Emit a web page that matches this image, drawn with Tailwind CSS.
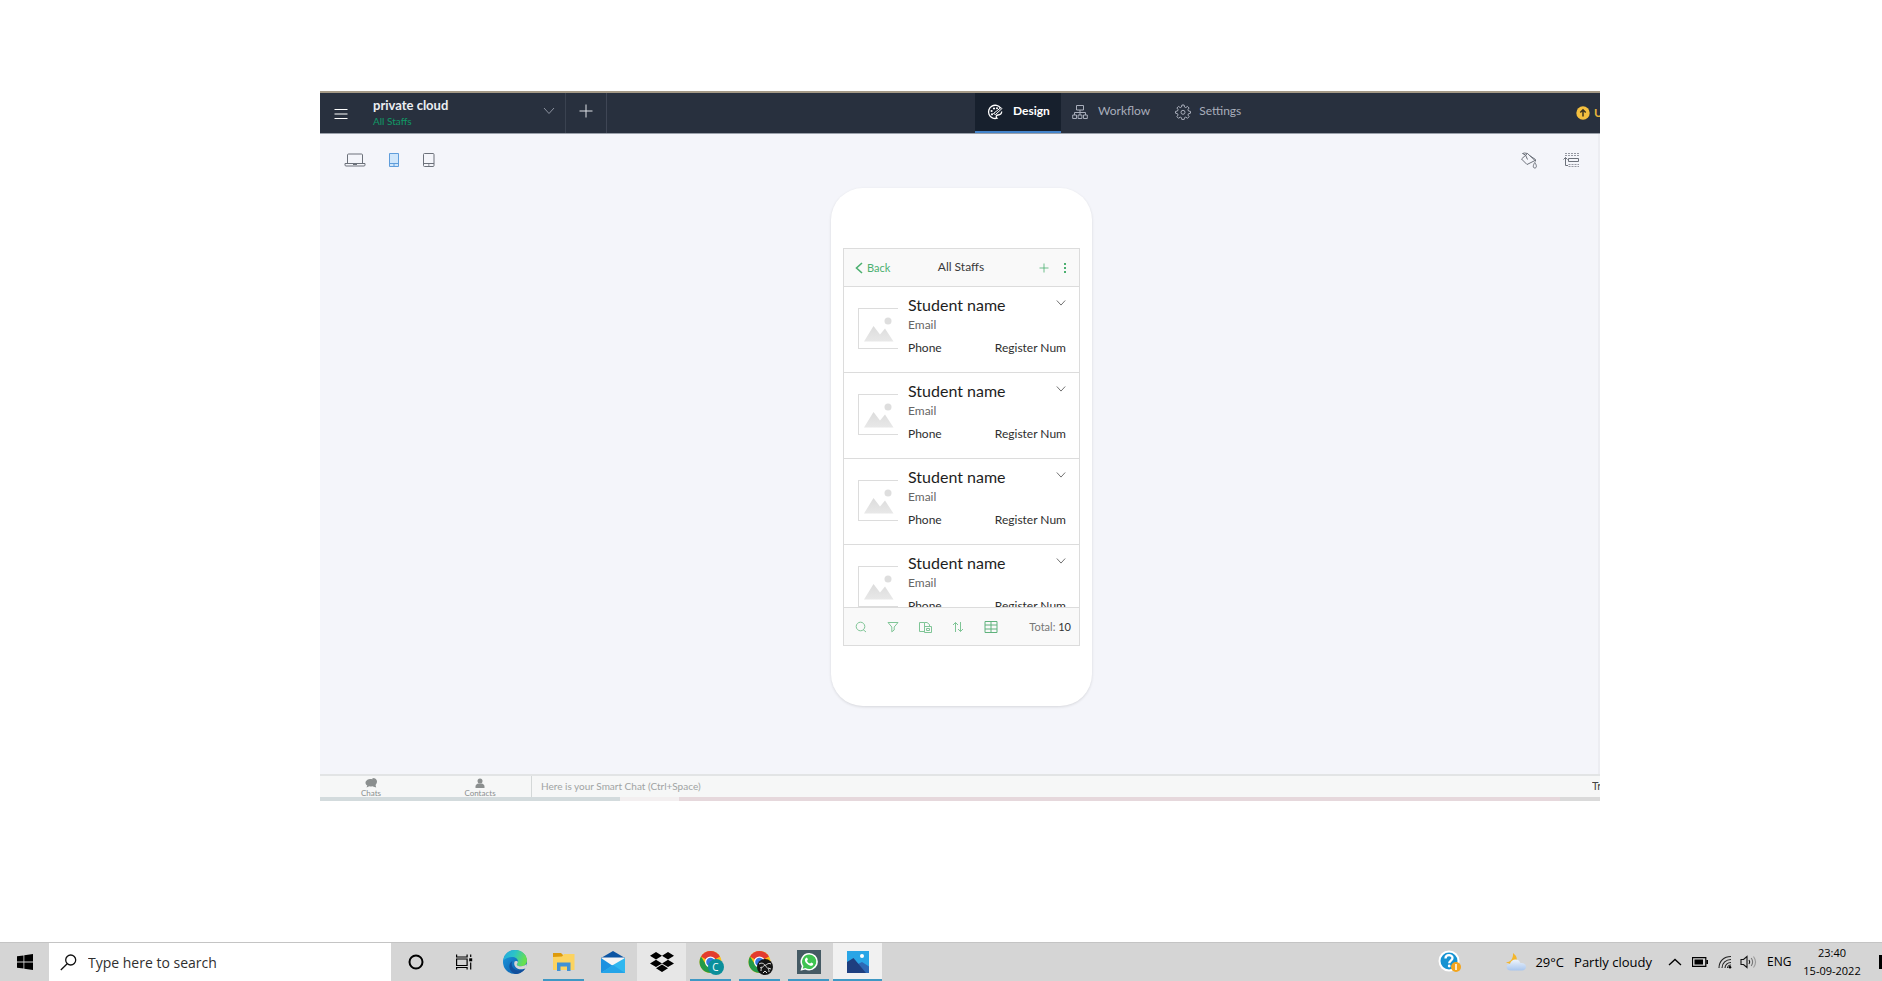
<!DOCTYPE html>
<html lang="en">
<head>
<meta charset="utf-8">
<title>private cloud - All Staffs</title>
<script src="https://cdn.jsdelivr.net/npm/@tailwindcss/browser@4"></script>
</head>
<body class="flex h-screen flex-col overflow-hidden bg-white font-['Lato',sans-serif]">

<svg class="absolute size-0" aria-hidden="true">
  <defs>
    <linearGradient id="edgeBlue" x1="0" y1="0" x2="1" y2="1"><stop offset="0" stop-color="#1b9de2"/><stop offset="1" stop-color="#0b4fa0"/></linearGradient>
    <linearGradient id="edgeGreen" x1="0" y1="0" x2="1" y2="0.3"><stop offset="0" stop-color="#23a7e0"/><stop offset="0.5" stop-color="#2cc3c8"/><stop offset="1" stop-color="#66e04f"/></linearGradient>
    <linearGradient id="mount" x1="0" y1="0" x2="0" y2="1"><stop offset="0" stop-color="#dcdcdc"/><stop offset="1" stop-color="#e8e8e8"/></linearGradient>
    <linearGradient id="cloud" x1="0" y1="0" x2="0" y2="1"><stop offset="0" stop-color="#eef4fc"/><stop offset="1" stop-color="#a9c6ee"/></linearGradient>
    <symbol id="chev" viewBox="0 0 12 8"><path d="M1 1l5 5.500 5-5.500" fill="none" stroke="currentColor"/></symbol>
    <symbol id="chrome" viewBox="0 0 24 24">
      <circle cx="11.500" cy="12" r="11" fill="#fbc116"/>
      <path d="M11.500 12L2 6.500A11 11 0 0 1 21 6.500z" fill="#e33b2e"/>
      <path d="M2 6.500A11 11 0 0 0 11.500 23L16 14.500 7 14.500z" fill="#229a48"/>
      <circle cx="11.500" cy="12" r="5.500" fill="#fff"/><circle cx="11.500" cy="12" r="4.300" fill="#3576e0"/>
    </symbol>
    <symbol id="photo" viewBox="0 0 32 28">
      <circle cx="25" cy="6" r="3.500" fill="#dedede"/>
      <path d="M1 26.500L10.500 11l6.500 8.500 5-6 8.500 13z" fill="url(#mount)"/>
    </symbol>
  </defs>
</svg>

<main class="flex min-h-0 flex-1 pt-[91px] pr-[282px] pb-[141px] pl-[320px]">
  <div class="flex min-w-0 flex-1 flex-col overflow-hidden bg-[#f4f5fa]">

    <header class="flex h-[43px] shrink-0 border-t-2 border-b border-t-[#a59a87] border-b-[#9aa0aa] bg-[#28303e] text-[#a9aebb]">
      <button class="flex w-[53px] items-center pt-0.5 pl-3.5 text-white" aria-label="Menu">
        <svg class="h-3 w-3.5" viewBox="0 0 14 12" stroke="currentColor"><path d="M0.500 1.500h13M0.500 6h13M0.500 10.500h13"/></svg>
      </button>
      <button class="flex w-[193px] items-center justify-between border-r border-[#3a4250] pr-2.5 text-left">
        <span class="flex flex-col">
          <span class="text-[13px] leading-4 font-bold text-[#eceef2]">private cloud</span>
          <span class="text-[10px] leading-4 text-[#109a66]">All Staffs</span>
        </span>
        <svg class="mb-1 h-2 w-3 text-[#8d93a0]"><use href="#chev"/></svg>
      </button>
      <button class="flex w-[41px] items-center justify-center border-r border-[#3f4655] pb-1 text-[#dfe2e7]" aria-label="Add tab">
        <svg class="size-3.5" viewBox="0 0 14 14" stroke="currentColor"><path d="M7 0.500v13M0.500 7h13"/></svg>
      </button>
      <nav class="ml-[368px] flex text-[12px] leading-4">
        <a href="#" class="flex w-[86px] items-center gap-2.5 border-b-2 border-[#4384cb] bg-[#17202d] pl-3 font-bold text-white">
          <svg class="size-4" viewBox="0 0 16 16" fill="none" stroke="currentColor" stroke-width="1.300"><path d="M13.500 4A6.600 6.600 0 1 0 10 14.200c-1.600-1.400-.6-3.200 1-3.200 1.800 0 3.600-.6 3.700-3.400"/><path d="M6.500 9.500L14 3.500l1 1-6.500 6z" stroke-width="1"/><g fill="currentColor" stroke="none"><circle cx="4.600" cy="7" r="1.100"/><circle cx="7" cy="4.500" r="1.100"/><circle cx="5" cy="10.300" r="1.100"/><circle cx="10" cy="4.300" r="1"/></g></svg>
          <span class="pb-0.5">Design</span>
        </a>
        <a href="#" class="flex items-center gap-2.5 border-b-2 border-transparent pl-[11px]">
          <svg class="size-4" viewBox="0 0 16 16" fill="none" stroke="currentColor"><path d="M4.500 1.500h7v4.500h-7zM8 6v5M2.500 11V8.500h11V11M.7 11h3.800v3.500H.7zM6.100 11h3.800v3.500H6.100zM11.500 11h3.800v3.500h-3.800z"/></svg>
          <span class="pb-0.5">Workflow</span>
        </a>
        <a href="#" class="flex items-center gap-2 border-b-2 border-transparent pl-[25px]">
          <svg class="size-4" viewBox="0 0 16 16" fill="none" stroke="currentColor"><path d="M6.900 1h2.200l.4 2 1.300.6 1.700-1.200 1.600 1.600-1.200 1.700.6 1.300 2 .4v1.800l-2 .5-.6 1.300 1.200 1.700-1.600 1.600-1.700-1.200-1.300.6-.4 1.900H6.900l-.4-1.900-1.300-.6-1.700 1.200-1.600-1.600 1.200-1.700L2.500 9.700l-2-.5V7.400l2-.4.6-1.300L1.900 4l1.600-1.600 1.700 1.200L6.500 3z"/><circle cx="8" cy="8.300" r="2"/></svg>
          <span class="pb-0.5">Settings</span>
        </a>
      </nav>
      <button class="ml-auto flex w-[24px] items-center gap-1 overflow-hidden text-[12px] font-bold whitespace-nowrap text-[#e8b43a]">
        <svg class="size-3.5 shrink-0" viewBox="0 0 14 14"><circle cx="7" cy="7" r="6.700" fill="#f4bf3f"/><path d="M7 10.500V4M4.300 6.500L7 3.800l2.700 2.700" stroke="#3b3321" stroke-width="1.500" fill="none"/></svg>
        <span>Upgrade</span>
      </button>
    </header>

    <div class="flex min-h-0 flex-1 flex-col border-r-2 border-[#ecedf2]">
      <div class="flex h-[54px] shrink-0 items-center pr-[18px] pb-0.5 pl-6 text-[#6c717a]">
        <button aria-label="Desktop"><svg class="h-4 w-[22px]" viewBox="0 0 22 16" fill="none" stroke="currentColor"><path d="M3.500 11V3a1 1 0 0 1 1-1h13a1 1 0 0 1 1 1v8M1 11.500h20v1.500a1 1 0 0 1-1 1H2a1 1 0 0 1-1-1zM9 12.500h4"/></svg></button>
        <button class="ml-[22px]" aria-label="Phone"><svg class="h-4 w-3" viewBox="0 0 12 16" fill="#cfe6fb" stroke="#5f9ddb"><path d="M1.500 1.500h9v13h-9zM1.500 11.500h9"/><path d="M5 13h2"/></svg></button>
        <button class="ml-[22px]" aria-label="Tablet"><svg class="h-4 w-3.5" viewBox="0 0 14 16" fill="none" stroke="currentColor"><rect x="1.500" y="1.500" width="10.500" height="13" rx="1"/><path d="M1.500 11.500h10.500M6 13h1.500"/></svg></button>
        <button class="ml-auto" aria-label="Theme"><svg class="size-[18px]" viewBox="0 0 18 18" fill="none" stroke="currentColor"><path d="M7.500 2.500l7.500 7L7 13.500 1.500 8zM7.500 8.500L5.500 4 2.500 2.500 4.500 2l3 .5M9.500 4.500l6 4v2"/><path d="M14.800 11.500c2.200 3 2 5.500 0 5.500s-2-2.500 0-5.500z"/></svg></button>
        <button class="ml-6" aria-label="Layout"><svg class="size-[18px]" viewBox="0 0 18 18" fill="none" stroke="currentColor"><path d="M6.500 7.500h10v3h-10z"/><path d="M3 2.500h14M3 4.500h14M6.500 13.500h10.500M6.500 15.500h10.500" stroke-dasharray="2 1" stroke-opacity="0.700"/><path d="M6 14.500H3.500V6.500M1.500 8.500l2-2 2 2"/></svg></button>
      </div>

      <div class="flex justify-center pl-[5px]">
        <div class="flex h-[518px] w-[261px] flex-col rounded-[32px] bg-white px-3 pt-[60px] shadow-[0_1px_3px_rgba(0,0,0,0.12)]">
          <div class="flex h-[398px] flex-col border border-[#dcdcdc]">
            <div class="flex h-[38px] shrink-0 items-center justify-between border-b border-[#dcdcdc] bg-[#f9f9f9] pr-2 pl-[11px] text-[#4cb070]">
              <button class="flex w-[70px] items-center gap-1 text-[11px] leading-4"><svg class="h-3 w-2" viewBox="0 0 8 12" fill="none" stroke="currentColor" stroke-width="1.600"><path d="M7 1L1.500 6 7 11"/></svg>Back</button>
              <h1 class="pb-0.5 text-[12px] leading-4 text-[#3a3a3a]">All Staffs</h1>
              <div class="flex w-[74px] items-center justify-end gap-2.5">
                <button aria-label="Add"><svg class="size-2.5" viewBox="0 0 10 10" stroke="currentColor" stroke-opacity="0.800"><path d="M5 .5v9M.5 5h9"/></svg></button>
                <button class="px-1" aria-label="More"><svg class="h-3 w-1" viewBox="0 0 4 12" fill="currentColor"><path d="M1 1h2v2H1zM1 5h2v2H1zM1 9h2v2H1z"/></svg></button>
              </div>
            </div>
            <ul id="rows" class="min-h-0 flex-1 overflow-hidden"></ul>
            <div class="flex h-[38px] shrink-0 items-center gap-5 border-t border-[#dcdcdc] bg-[#f9f9f9] pr-2 pl-[11px] text-[#7fc596]">
              <button aria-label="Search"><svg class="size-3" viewBox="0 0 12 12" fill="none" stroke="currentColor"><circle cx="5.500" cy="5.500" r="4.300"/><path d="M8 8.500L11 11"/></svg></button>
              <button aria-label="Filter"><svg class="size-3" viewBox="0 0 12 12" fill="none" stroke="currentColor"><path d="M1 1.500h10L7.200 6v3l-2.400 1.800V6z"/></svg></button>
              <button aria-label="Group"><svg class="h-3 w-[13px]" viewBox="0 0 13 12" fill="none" stroke="currentColor"><path d="M5.500 10.500h-5v-9h5zM5.500 1.500h2.500l2.500 2V5M5.500 5.500h7v6h-7zM7.500 7.500h3V9.500h-3z"/></svg></button>
              <button aria-label="Sort"><svg class="size-3" viewBox="0 0 12 12" fill="none" stroke="currentColor"><path d="M3.500 11V1.500M1 4l2.500-2.500L6 4M8.500 1v9.500M6 8l2.500 2.500L11 8"/></svg></button>
              <button aria-label="Table view"><svg class="size-3.5" viewBox="0 0 14 14" fill="none" stroke="#5fb27c"><path d="M1 1.500h12v11H1zM1 5h12M1 9h12M7 1.500v11"/></svg></button>
              <p class="ml-auto text-[11px] leading-4 text-[#777]">Total: <span class="text-[#333]">10</span></p>
            </div>
          </div>
        </div>
      </div>
    </div>

    <footer class="flex h-[23px] shrink-0 border-t-2 border-[#e2e4e5] bg-[#f6f7f7] text-[#8b8f8f]">
      <button class="flex w-[102px] flex-col items-center justify-end">
        <svg class="h-3 w-3.5 shrink-0" viewBox="0 0 14 12" fill="currentColor"><path d="M7 2c3 0 5 1.600 5 3.800S10 9.500 7 9.500c-.6 0-1.200 0-1.700-.2L2.500 10.500l.8-2C2 7.800 1.500 6.900 1.500 5.800 1.500 3.600 4 2 7 2z"/><path d="M8.500 1C11.500 1 13 2.600 13 4.500c0 1.400-.8 2.600-1.500 3.200l.7 2.800-3.200-1z"/></svg>
        <span class="text-[8px] leading-2">Chats</span>
      </button>
      <button class="flex w-[109px] grow-0 flex-col items-center justify-end pl-[7px]">
        <svg class="h-3 w-2.5 shrink-0" viewBox="0 0 10 12" fill="currentColor"><circle cx="5" cy="4" r="2.500"/><path d="M.5 11V9.500C.5 7.800 2 6.800 3.500 6.500h3C8 6.800 9.500 7.800 9.500 9.500V11z"/></svg>
        <span class="text-[8px] leading-2">Contacts</span>
      </button>
      <input aria-label="Smart Chat" placeholder="Here is your Smart Chat (Ctrl+Space)" class="min-w-0 flex-1 border-l border-[#d4d8d8] pl-[9px] text-[10px] placeholder:text-[#a0a3a3]">
      <a href="#" class="w-2 overflow-hidden text-[11px] leading-5 whitespace-nowrap text-[#444]">Try</a>
    </footer>
    <div class="flex h-1 shrink-0"><div class="w-[300px] bg-[#d3dbdd]"></div><div class="w-[59px] bg-[#f3eff0]"></div><div class="flex-1 bg-[#e6d8dc]"></div><div class="w-10 bg-[#dadada]"></div></div>
  </div>
</main>

<footer class="flex h-[39px] shrink-0 border-t border-[#c4c4c4] bg-[#d5d5d5] font-['Open_Sans','Noto_Sans',sans-serif] text-black">
  <button class="flex w-[49px] items-center justify-center" aria-label="Start"><svg class="size-4" viewBox="0 0 16 16"><path d="M0 2.300L6.500 1.400V7.600H0zM7.300 1.300L16 0v7.600H7.300zM0 8.400h6.500v6.200L0 13.700zM7.300 8.400H16V16l-8.700-1.200z"/></svg></button>
  <label class="flex w-[342px] items-center gap-[11px] bg-white pl-[11px]">
    <svg class="size-[17px] shrink-0" viewBox="0 0 17 17" fill="none" stroke="#111" stroke-width="1.300"><circle cx="10.700" cy="6" r="5"/><path d="M7.200 9.700L.8 16"/></svg>
    <input aria-label="Search" placeholder="Type here to search" class="min-w-0 flex-1 text-[14px] outline-none placeholder:text-[#2f2f2f]">
  </label>
  <button class="flex w-[49px] items-center justify-center" aria-label="Cortana"><svg class="size-4" viewBox="0 0 16 16"><circle cx="8" cy="8" r="6.500" fill="none" stroke="#000" stroke-width="2"/></svg></button>
  <button class="flex w-[50px] items-center justify-center pr-0.5" aria-label="Task view"><svg class="h-4 w-[17px]" viewBox="0 0 17 16" fill="none" stroke="#000" stroke-width="1.200"><path d="M.6.500v2.500h10.500V.5M.6 5h10.500v6.500H.6zM.6 15.500V13.500h10.500v2M14.700.5v2.500M14.700 8.500v7"/><path d="M13.200 4.300h3v3h-3z" fill="#000" stroke="none"/></svg></button>

  <button class="flex w-[49px] items-center justify-center" aria-label="Edge"><svg class="size-6" viewBox="0 0 24 24"><circle cx="12" cy="12" r="12" fill="url(#edgeBlue)"/><path d="M.2 10.500C1 4.200 6 0 12 0c7 0 12 5 12 10.500 0 3.500-2.600 5.800-6 5.800-2.600 0-4.200-.8-4.200-1.800 0-.7 1.200-1.300 1.200-3C15 8.800 12.500 7 9 7 5 7 2 8.500.2 10.500z" fill="url(#edgeGreen)"/><path d="M9.500 11c-5 2.500-4 11 3 13 4 0 8-2.500 10-6-2 1.700-4.500 2.500-7 2.500-5 0-8.500-5-6-9.500z" fill="#124f9c"/><path d="M11.600 11.500c.8-.9 3 -.6 3.300.5 0 1.200-1.100 1.700-1.100 2.500 0 1 1.600 1.800 4.200 1.800 2.500 0 4.500-1 5.400-2.500L24 18l-1.500.5c-1.300.5-2.500.8-4.500.8-4.500 0-8-3.800-6.400-7.800z" fill="#d5d5d5"/></svg></button>
  <button class="flex w-[49px] px-1" aria-label="File Explorer"><span class="flex flex-1 items-center justify-center self-stretch border-b-2 border-[#3f98c4] pt-0.5"><svg class="h-5 w-[22px]" viewBox="0 0 22 20"><path d="M0 1h8l2 2v3H0z" fill="#dd9a0c"/><path d="M0 5l9-.5L11 2h10.500v16H0z" fill="#fcd360"/><path d="M4 19v-8.500h13.500V19H14v-4.500H7.500V19z" fill="#3f91d6"/></svg></span></button>
  <button class="flex w-[49px] items-center justify-center" aria-label="Mail"><svg class="size-6" viewBox="0 0 24 24"><path d="M0 8L12 1l12 7z" fill="#0c55a3"/><path d="M1 7.500h22V15H1z" fill="#f5f5f5"/><path d="M0 8l12 8-12 7z" fill="#1c91e0"/><path d="M24 8v15H0l12-8z" fill="#30b7ef"/><path d="M0 23h24L12 15z" fill="#24a4e8"/></svg></button>
  <button class="flex w-[49px] items-center justify-center bg-[#e7e7e7]" aria-label="Dropbox"><svg class="h-5 w-6" viewBox="0 0 24 20"><path d="M6 0l6 3.700-6 3.700L0 3.700zM18 0l6 3.700-6 3.700-6-3.700zM6 7.700l6 3.700-6 3.700-6-3.700zM18 7.700l6 3.700-6 3.700-6-3.700zM12 12.500l6 3.700L12 20l-6-3.800z"/></svg></button>
  <button class="flex w-[49px] px-1" aria-label="Chrome"><span class="flex flex-1 items-center justify-center self-stretch border-b-2 border-[#3f98c4] pt-0.5">
    <span class="relative size-6"><svg class="size-6"><use href="#chrome"/></svg><span class="absolute top-[9px] left-[9px] flex size-4 items-center justify-center rounded-full bg-[#0b8f9b] text-[10px] text-white">C</span></span></span></button>
  <button class="flex w-[49px] px-1" aria-label="Chrome profile"><span class="flex flex-1 items-center justify-center self-stretch border-b-2 border-[#3f98c4] pt-0.5">
    <span class="relative size-6"><svg class="size-6"><use href="#chrome"/></svg><svg class="absolute top-[9px] left-[9px] size-4" viewBox="0 0 16 16"><circle cx="8" cy="8" r="8" fill="#151515"/><path d="M2 5c3-2 5 0 6 1s3-3 6-1M4 12c0-4 2-4 4-6 1 3 4 2 4 7M3 9l2-1M11 9l3 1M6 14l2-2 2 2" stroke="#ddd" stroke-width="1" fill="none"/></svg></span></span></button>
  <button class="flex w-[49px] px-1" aria-label="WhatsApp"><span class="flex flex-1 items-center justify-center self-stretch border-b-2 border-[#3f98c4] pt-0.5"><svg class="size-6" viewBox="0 0 24 24"><path d="M0 0h24v24H0z" fill="#455a64"/><path d="M12.200 3a8.700 8.700 0 0 1 0 17.400c-1.500 0-2.900-.4-4-1L3.500 20.700l1.300-4.500A8.700 8.700 0 0 1 12.200 3z" fill="#fff"/><path d="M12.200 4.500a7.200 7.200 0 1 1-3.700 13.400l-2.800.8.800-2.700A7.200 7.200 0 0 1 12.200 4.500z" fill="#3fc351"/><path d="M9.300 7.700c.5-.2.900 0 1 .4l.6 1.500c0 .5-.8 1-.8 1.300.6 1.300 1.700 2.200 3 2.700.4 0 .8-1 1.300-1l1.700.9c.3.300 0 1.500-.7 1.900-2 1.300-7-2-7.500-5-.1-1.200.6-2.300 1.400-2.700z" fill="#fff"/></svg></span></button>
  <button class="flex w-[49px] items-center justify-center border-b-2 border-[#3f98c4] bg-[#f1f1f1] pt-0.5" aria-label="Photos"><svg class="size-[22px]" viewBox="0 0 22 22"><path d="M0 0h22v22H0z" fill="#2aa5e6"/><path d="M10 13.500l5-2.500 7 4.500V22h-4z" fill="#2d68b5"/><path d="M0 11l6.500-4 12.500 15H0z" fill="#1e3f80"/><circle cx="15" cy="5" r="2" fill="#fff"/></svg></button>

  <div class="ml-auto flex items-center text-[13px] leading-5">
    <button aria-label="Get help"><svg class="size-6" viewBox="0 0 24 24"><circle cx="11" cy="11" r="10.500" fill="#fff"/><circle cx="11" cy="11" r="8.500" fill="#1593d2"/><path d="M7.500 8.500c0-4.500 7-4.300 7-.4 0 2.500-3.300 2.600-3.300 5.200" stroke="#fff" stroke-width="2.300" fill="none"/><circle cx="11.200" cy="16" r="1.400" fill="#fff"/><circle cx="18" cy="17" r="5" fill="#f3a51d"/><path d="M18 14v6" stroke="#fff" stroke-width="1.500"/></svg></button>
    <button class="ml-[43px] flex items-center gap-2">
      <svg class="h-5 w-[22px]" viewBox="0 0 22 20"><path d="M8 1c3 2.500 5 5 3 8.500-2 3-7 3-10 .5 4 .5 7.500-3 7-9z" fill="#f3b62c"/><path d="M6 18.500c-3 0-4.500-1.700-4.500-3.500S3 12 5 12c.5-3 3-4.500 5.300-4.500S14.500 8.500 15.500 11c3-.5 5.500 1.200 5.500 3.800 0 2.200-1.800 3.700-4 3.700z" fill="url(#cloud)"/></svg>
      <span class="flex gap-2.5"><span>29°C</span><span>Partly cloudy</span></span>
    </button>
    <button class="ml-4" aria-label="Show hidden icons"><svg class="h-2 w-3.5" viewBox="0 0 14 8" fill="none" stroke="#000" stroke-width="1.300"><path d="M1 7l6-5.500L13 7"/></svg></button>
    <button class="ml-2.5" aria-label="Battery"><svg class="h-2.5 w-4" viewBox="0 0 16 10"><path d="M.5.700h13.300v8.600H.5z" fill="none" stroke="#000" stroke-width="1.200"/><path d="M2.500 2.500h8.500v5H2.500zM14.300 3H16v4h-1.700z"/></svg></button>
    <button class="ml-2.5" aria-label="Network"><svg class="size-3.5" viewBox="0 0 14 14" fill="none" stroke="#222" stroke-width="1.100"><path d="M1 13C1 6 6 1.500 13 1.500M4 13c0-5 4-8.500 9-8.500M7 13c0-3 2.500-5.500 6-5.500M9.500 13c0-1.500 1.500-3 3.500-3"/><circle cx="12" cy="12.300" r="1.300" fill="#000" stroke="none"/></svg></button>
    <button class="ml-2" aria-label="Volume"><svg class="h-3.5 w-[17px]" viewBox="0 0 17 14" fill="none" stroke="#111" stroke-width="1.100"><path d="M1 4.500h2.500L7 1.500v11L3.500 9.500H1z"/><path d="M9 5c.9 1.200.9 2.800 0 4"/><path d="M11.200 3c1.800 2.500 1.800 5.500 0 8" stroke="#777"/><path d="M13.500 1.500c2.600 3.500 2.600 7.500 0 11" stroke="#999"/></svg></button>
    <button class="ml-2.5 w-6 text-[12px]">ENG</button>
    <button class="ml-2 flex w-[66px] flex-col items-center text-[11px] leading-[18px]"><span>23:40</span><span>15-09-2022</span></button>
    <button class="ml-3.5 flex h-3.5 w-[3px] bg-black" aria-label="Notifications"></button>
  </div>
</footer>

<template id="row">
  <li class="flex h-[86px] border-b border-[#dcdcdc] pr-[13px] pl-3.5">
    <div class="mt-[21px] flex h-[41px] w-10 shrink-0 items-center justify-center border border-r-0 border-[#dcdcdc]"><svg class="h-7 w-8"><use href="#photo"/></svg></div>
    <div class="ml-2.5 flex flex-1 flex-col pt-2 text-[12px]">
      <div class="flex justify-between"><h2 class="text-[16px] leading-5 text-[#1e1e1e]">Student name</h2><button class="flex h-4 w-2.5 items-center" aria-label="Expand"><svg class="h-2 w-2.5 text-[#555]"><use href="#chev"/></svg></button></div>
      <p class="leading-5 text-[#666]">Email</p>
      <p class="mt-[3px] flex justify-between leading-5 text-[#2e2e2e]"><span>Phone</span><span>Register Num</span></p>
    </div>
  </li>
</template>
<script>
  const rows = document.getElementById('rows'), row = document.getElementById('row');
  for (let i = 0; i < 4; i++) rows.append(row.content.cloneNode(true));
</script>
</body>
</html>
